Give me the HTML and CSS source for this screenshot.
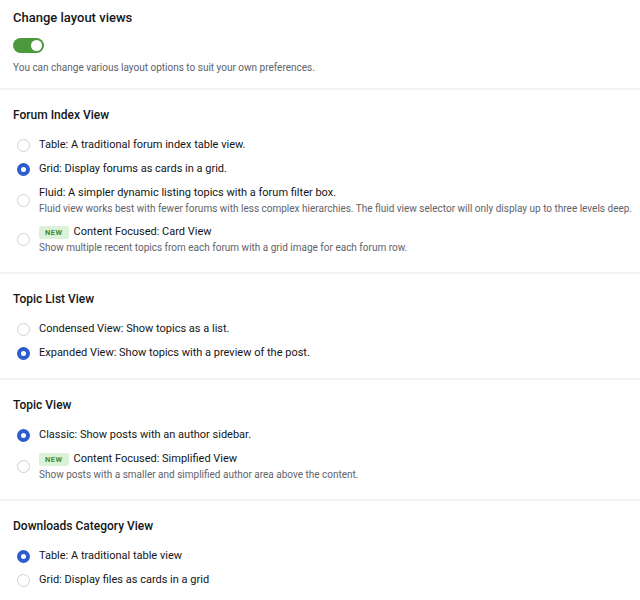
FILE: index.html
```html
<!DOCTYPE html>
<html>
<head>
<meta charset="utf-8">
<link rel="stylesheet" href="styles.css">
</head>
<body>
<section class="section first">
  <h2 class="heading big">Change layout views</h2>
  <div class="toggle"><span class="knob"></span></div>
  <p class="desc">You can change various layout options to suit your own preferences.</p>
</section>

<section class="section">
  <h2 class="heading">Forum Index View</h2>
  <div class="options">
    <label class="option"><span class="radio"></span><span class="text"><span class="title">Table: A traditional forum index table view.</span></span></label>
    <label class="option"><span class="radio on"></span><span class="text"><span class="title">Grid: Display forums as cards in a grid.</span></span></label>
    <label class="option"><span class="radio"></span><span class="text"><span class="title">Fluid: A simpler dynamic listing topics with a forum filter box.</span><span class="sub">Fluid view works best with fewer forums with less complex hierarchies. The fluid view selector will only display up to three levels deep.</span></span></label>
    <label class="option"><span class="radio"></span><span class="text"><span class="title"><span class="badge">NEW</span>Content Focused: Card View</span><span class="sub">Show multiple recent topics from each forum with a grid image for each forum row.</span></span></label>
  </div>
</section>

<section class="section">
  <h2 class="heading">Topic List View</h2>
  <div class="options">
    <label class="option"><span class="radio"></span><span class="text"><span class="title">Condensed View: Show topics as a list.</span></span></label>
    <label class="option"><span class="radio on"></span><span class="text"><span class="title">Expanded View: Show topics with a preview of the post.</span></span></label>
  </div>
</section>

<section class="section">
  <h2 class="heading">Topic View</h2>
  <div class="options">
    <label class="option"><span class="radio on"></span><span class="text"><span class="title">Classic: Show posts with an author sidebar.</span></span></label>
    <label class="option"><span class="radio"></span><span class="text"><span class="title"><span class="badge">NEW</span>Content Focused: Simplified View</span><span class="sub">Show posts with a smaller and simplified author area above the content.</span></span></label>
  </div>
</section>

<section class="section last">
  <h2 class="heading">Downloads Category View</h2>
  <div class="options">
    <label class="option"><span class="radio on"></span><span class="text"><span class="title">Table: A traditional table view</span></span></label>
    <label class="option"><span class="radio"></span><span class="text"><span class="title">Grid: Display files as cards in a grid</span></span></label>
  </div>
</section>
</body>
</html>
```

FILE: styles.css
```css
* { box-sizing: border-box; }
body {
  margin: 0;
  background: #fff;
  font-family: Roboto, "Liberation Sans", sans-serif;
  color: #1e1f22;
  width: 640px;
}
.section {
  padding: 17px 13px 17px;
  border-bottom: 2px solid #f2f2f3;
}
.section.first { padding-top: 10px; padding-bottom: 13px; }
.section.last { border-bottom: none; }
.heading {
  margin: 0;
  font-size: 12px;
  line-height: 16px;
  font-weight: 500;
  color: #151618;
}
.heading.big { font-size: 13px; }
.toggle {
  margin-top: 12px;
  width: 31px;
  height: 15px;
  border-radius: 8px;
  background: #4b9a3c;
  position: relative;
}
.knob {
  position: absolute;
  right: 2px;
  top: 2px;
  width: 11px;
  height: 11px;
  border-radius: 50%;
  background: #fff;
}
.desc {
  margin: 8px 0 0;
  font-size: 10px;
  line-height: 14px;
  color: #5e6269;
}
.options {
  margin-top: 14px;
  display: flex;
  flex-direction: column;
  gap: 8px;
}
.option {
  display: flex;
  align-items: center;
  gap: 9px;
}
.radio {
  flex: none;
  width: 13px;
  height: 13px;
  margin-left: 4px;
  border-radius: 50%;
  border: 1px solid #cfd1d4;
  background: #fff;
}
.radio.on {
  border: 4px solid #2d5ccf;
  background: #fff;
}
.text { display: flex; flex-direction: column; }
.title {
  font-size: 11px;
  line-height: 16px;
  color: #141517;
  display: flex;
  align-items: center;
}
.sub {
  font-size: 10px;
  line-height: 15px;
  color: #5f636a;
  white-space: nowrap;
}
.badge {
  display: inline-block;
  background: #dcf2d8;
  color: #3d8b3a;
  font-size: 7.5px;
  font-weight: 700;
  letter-spacing: 0.5px;
  line-height: 13px;
  padding: 0 6px;
  border-radius: 2px;
  margin-right: 5px;
}
```
